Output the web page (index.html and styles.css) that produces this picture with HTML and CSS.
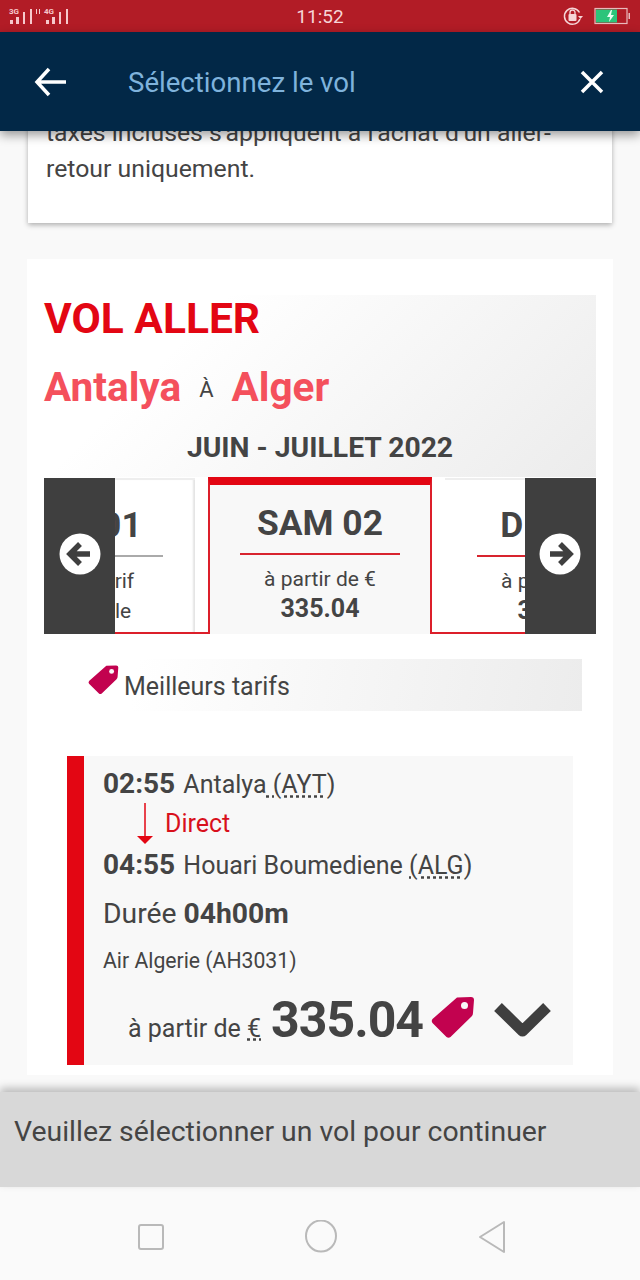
FILE: index.html
```html
<!DOCTYPE html>
<html lang="fr">
<head>
  <meta charset="UTF-8">
  <meta name="viewport" content="width=device-width, initial-scale=1.0">
  <title>Sélectionnez le vol</title>
  <link rel="stylesheet" href="styles.css">
</head>
<body>
  <svg class="defs" width="0" height="0">
    <symbol id="tag" viewBox="0 0 44 42">
      <path fill="#c2024f" d="M26 1.5 40 1Q43 1 43 4L42 17Q42 19 40.5 20.5L19.5 41Q17.5 42.5 15.5 41L1.5 27Q0 25 1.5 23Z"/>
      <circle cx="33.5" cy="9.5" r="3.5" fill="#f8f8f8"/>
    </symbol>
  </svg>

  <div class="phone">
    <div class="status">
      <div class="signal">
        <svg width="72" height="32" viewBox="0 0 72 32" fill="#f6c9cc">
          <text x="9" y="14" font-size="8" font-weight="700" font-family="Roboto">3G</text>
          <rect x="10" y="20" width="3" height="4"/>
          <rect x="16" y="17" width="3" height="7"/>
          <rect x="23" y="12" width="2" height="12"/>
          <rect x="30" y="9" width="2" height="15"/>
          <rect x="36" y="9" width="1" height="5"/>
          <rect x="39" y="9" width="1" height="5"/>
          <text x="44" y="14" font-size="8" font-weight="700" font-family="Roboto">4G</text>
          <rect x="46" y="20" width="3" height="4"/>
          <rect x="52" y="17" width="3" height="7"/>
          <rect x="59" y="12" width="2" height="12"/>
          <rect x="66" y="9" width="2" height="15"/>
        </svg>
      </div>
      <div class="time">11:52</div>
      <div class="sys">
        <svg width="22" height="22" viewBox="0 0 22 22">
          <path d="M17.500 7.500A8 8 0 1 0 18 14" fill="none" stroke="#f6d5d7" stroke-width="1.500"/>
          <path d="M16 11h5l-2.500 3z" fill="#f6d5d7"/>
          <rect x="6.500" y="9" width="8" height="7" rx="1" fill="#f6d5d7"/>
          <path d="M8 9V7.500a2.500 2.500 0 0 1 5 0V9" fill="none" stroke="#f6d5d7" stroke-width="1.300"/>
        </svg>
        <svg width="38" height="18" viewBox="0 0 38 18">
          <rect x="1" y="1.500" width="32" height="15" fill="none" stroke="#e9b9bc" stroke-width="1.200"/>
          <rect x="2" y="2.500" width="21" height="13" fill="#2cc47a"/>
          <path d="M17 3l-4 7h3l-1 5 5-7h-3l1-5z" fill="#e8fff2"/>
          <rect x="34.500" y="6" width="1.500" height="6" fill="#e9b9bc"/>
        </svg>
      </div>
    </div>

    <header class="topbar">
      <svg class="back" width="32" height="30" viewBox="0 0 32 30" fill="none" stroke="#fff" stroke-width="3.500">
        <path d="M32 15H3M15 2 3 15l12 13"/>
      </svg>
      <h1>Sélectionnez le vol</h1>
      <svg class="close" width="24" height="24" viewBox="0 0 24 24" fill="none" stroke="#fff" stroke-width="3.500">
        <path d="M2 2l20 20M22 2 2 22"/>
      </svg>
    </header>

    <main class="content">
      <section class="notice">
        <p>taxes incluses s'appliquent à l'achat d'un aller-retour uniquement.</p>
      </section>

      <section class="panel">
        <div class="route">
          <h2>VOL ALLER</h2>
          <p class="cities"><span>Antalya</span><small>À</small><span>Alger</span></p>
          <p class="month">JUIN - JUILLET 2022</p>
        </div>

        <div class="dates">
          <div class="day off">
            <div class="day-name">VEN 01</div>
            <div class="day-sub">Aucun tarif</div>
            <div class="day-sub">disponible</div>
          </div>
          <div class="day active">
            <div class="day-name">SAM 02</div>
            <div class="day-sub">à partir de €</div>
            <div class="day-price">335.04</div>
          </div>
          <div class="day">
            <div class="day-name">DIM 03</div>
            <div class="day-sub">à partir de €</div>
            <div class="day-price">335.04</div>
          </div>
          <div class="arrow arrow-left">
            <svg width="42" height="42" viewBox="0 0 42 42">
              <circle cx="21" cy="21" r="20.500" fill="#fff"/>
              <path d="M31 21H12M21 11 11 21l10 10" fill="none" stroke="#3f3f3f" stroke-width="5.500"/>
            </svg>
          </div>
          <div class="arrow arrow-right">
            <svg width="42" height="42" viewBox="0 0 42 42">
              <circle cx="21" cy="21" r="20.500" fill="#fff"/>
              <path d="M11 21h19M21 11l10 10-10 10" fill="none" stroke="#3f3f3f" stroke-width="5.500"/>
            </svg>
          </div>
        </div>

        <div class="best">
          <svg class="tag-small" width="31" height="31"><use href="#tag"/></svg>
          <span>Meilleurs tarifs</span>
        </div>

        <article class="flight">
          <div class="leg"><b>02:55</b> Antalya<abbr> (AYT</abbr>)</div>
          <div class="direct">
            <svg width="16" height="41" viewBox="0 0 16 41">
              <path d="M8 0V33" stroke="#e30613" stroke-width="1.500"/>
              <path d="M0 33h16l-8 8z" fill="#e30613"/>
            </svg>
            <span>Direct</span>
          </div>
          <div class="leg"><b>04:55</b> Houari Boumediene <abbr>(ALG</abbr>)</div>
          <div class="duration">Durée <b>04h00m</b></div>
          <div class="carrier">Air Algerie (AH3031)</div>
          <div class="price">
            <span class="from">à partir de <abbr>€</abbr></span>
            <span class="amount">335.04</span>
            <svg class="tag-big" width="44" height="42"><use href="#tag"/></svg>
            <svg class="chevron" width="58" height="38" viewBox="0 0 58 38" fill="none" stroke="#3f3f3f" stroke-width="11" stroke-linejoin="round">
              <path d="M4 6 28.500 30 53 6"/>
            </svg>
          </div>
        </article>
      </section>
    </main>

    <div class="sheet">Veuillez sélectionner un vol pour continuer</div>

    <nav class="navbar">
      <svg width="28" height="28" viewBox="0 0 28 28" fill="none" stroke="#b9b9b9" stroke-width="2">
        <rect x="2" y="2" width="24" height="24" rx="2"/>
      </svg>
      <svg width="34" height="34" viewBox="0 0 34 34" fill="none" stroke="#b9b9b9" stroke-width="2">
        <ellipse cx="16" cy="16" rx="15" ry="15.500"/>
      </svg>
      <svg width="28" height="34" viewBox="0 0 28 34" fill="none" stroke="#b9b9b9" stroke-width="2" stroke-linejoin="round">
        <path d="M26 2V32L2 17Z"/>
      </svg>
    </nav>
  </div>
</body>
</html>
```

FILE: styles.css
```css
body {
  margin: 0;
  font-family: Roboto, "Liberation Sans", sans-serif;
  color: #444;
}
.defs {
  display: block;
  height: 0;
}
.phone {
  width: 640px;
  height: 1280px;
  display: flex;
  flex-direction: column;
  overflow: hidden;
  background-color: #f9f9f9;
}

/* status bar */
.status {
  flex: 0 0 32px;
  display: flex;
  align-items: center;
  justify-content: space-between;
  background-color: #b21c26;
  color: #f6d5d7;
}
.signal {
  width: 160px;
  height: 32px;
}
.time {
  font-size: 19px;
}
.sys {
  width: 160px;
  display: flex;
  align-items: center;
  justify-content: flex-end;
  gap: 10px;
  padding-right: 8px;
  box-sizing: border-box;
}

/* top bar */
.topbar {
  flex: 0 0 99px;
  z-index: 2;
  display: flex;
  align-items: center;
  padding: 0 36px 0 34px;
  background-color: #022847;
  box-shadow: 0 4px 10px rgba(0, 0, 0, 0.4);
}
.topbar h1 {
  flex: 1;
  margin: 2px 0 0 62px;
  font-size: 27.6px;
  font-weight: 400;
  color: #7fb3dc;
}

/* scrolled content */
.content {
  flex: 1;
  min-height: 0;
  overflow: hidden;
  padding: 0 27px;
}
.notice {
  margin: -16px 1px 36px;
  padding: 0 18px 36px;
  background-color: #fff;
  box-shadow: 0 2px 5px rgba(0, 0, 0, 0.3);
}
.notice p {
  margin: 0;
  font-size: 24.8px;
  line-height: 36px;
  color: #444;
}
.panel {
  padding: 36px 17px 10px;
  background-color: #fff;
}
.route {
  height: 182px;
  background: linear-gradient(135deg, #fff 25%, #ececec 100%);
}
.route h2 {
  margin: 0;
  padding-top: 1px;
  font-size: 42.5px;
  line-height: 45px;
  font-weight: 700;
  color: #e30613;
}
.cities {
  display: flex;
  align-items: center;
  margin: 20px 0 0;
  font-size: 40.5px;
  line-height: 46px;
  font-weight: 700;
  color: #f4505c;
}
.cities small {
  margin: 6px 18px 0;
  font-size: 22px;
  font-weight: 400;
  color: #444;
}
.month {
  margin: 18px 0 0;
  text-align: center;
  font-size: 28.3px;
  line-height: 34px;
  font-weight: 700;
}

/* date carousel */
.dates {
  position: relative;
  height: 157px;
  display: flex;
  justify-content: center;
  align-items: flex-end;
  gap: 13px;
  overflow: hidden;
  background: linear-gradient(#dc1f2a, #dc1f2a) bottom / 100% 2px no-repeat;
}
.day {
  flex: 0 0 224px;
  box-sizing: border-box;
  height: 156px;
  padding: 28px 32px 0;
  text-align: center;
  background-color: #fff;
  border-top: 2px solid #eee;
  border-bottom: 2px solid #dc1f2a;
}
.day.active {
  height: 157px;
  padding: 21px 30px 0;
  background-color: #f8f8f8;
  border: 2px solid #dc1f2a;
  border-top: 8px solid #e30613;
  border-bottom: 0;
}
.day.off {
  box-shadow: inset -3px 0 2px -1px #e4e4e4;
}
.day-name {
  padding-bottom: 13px;
  border-bottom: 2px solid #d8242e;
  margin-bottom: 9px;
  font-size: 35.4px;
  line-height: 34px;
  font-weight: 700;
}
.day.off .day-name {
  border-bottom-color: #aaa;
}
.day-sub {
  font-size: 21px;
  line-height: 30px;
  white-space: nowrap;
}
.day-price {
  padding-top: 1px;
  font-size: 25px;
  line-height: 28px;
  font-weight: 700;
}
.arrow {
  position: absolute;
  top: 1px;
  bottom: 0;
  width: 71px;
  display: flex;
  align-items: center;
  justify-content: center;
  background-color: #3f3f3f;
}
.arrow svg {
  margin-top: -4px;
}
.arrow-left {
  left: 0;
}
.arrow-right {
  right: 0;
  box-sizing: border-box;
  padding-right: 2px;
}

/* best price bar */
.best {
  height: 52px;
  margin: 25px 14px 45px;
  display: flex;
  align-items: center;
  padding: 3px 0 0 30px;
  box-sizing: border-box;
  font-size: 25px;
  background: linear-gradient(100deg, #fff 15%, #ececec 100%);
}
.tag-small {
  margin: -14px 5px 0 0;
}

/* flight row */
.flight {
  height: 309px;
  box-sizing: border-box;
  margin: 0 23px;
  padding: 11px 0 0 19px;
  border-left: 17px solid #e30613;
  background-color: #f8f8f8;
}
.leg {
  font-size: 25px;
  line-height: 34px;
  white-space: nowrap;
}
.leg b {
  margin-right: 2px;
  font-size: 28px;
}
.leg + .direct + .leg {
  line-height: 42px;
}
abbr {
  text-decoration: underline dotted;
}
.direct {
  height: 42px;
  display: flex;
  align-items: center;
  gap: 12px;
  padding-left: 34px;
  font-size: 25px;
  color: #d8101c;
}
.duration {
  margin-top: 7px;
  font-size: 28.3px;
  line-height: 40px;
}
.carrier {
  margin-top: 12px;
  font-size: 21.2px;
  line-height: 30px;
}
.price {
  display: flex;
  align-items: center;
  margin-top: 14px;
  padding-left: 25px;
}
.from {
  margin-top: 16px;
  font-size: 25px;
}
.amount {
  margin: 0 8px 0 10px;
  font-size: 50px;
  letter-spacing: -1px;
  line-height: 60px;
  font-weight: 700;
}
.tag-big {
  margin-top: -7px;
}
.chevron {
  margin-left: 19px;
}

/* bottom */
.sheet {
  flex: 0 0 95px;
  z-index: 2;
  box-sizing: border-box;
  padding: 21px 14px 0;
  font-size: 28.4px;
  line-height: 38px;
  background-color: #d8d8d8;
  box-shadow: 0 -4px 8px rgba(0, 0, 0, 0.25);
}
.navbar {
  flex: 0 0 93px;
  display: flex;
  align-items: center;
  justify-content: space-between;
  padding: 7px 134px 0 137px;
  box-sizing: border-box;
  background-color: #fafafa;
}
```
